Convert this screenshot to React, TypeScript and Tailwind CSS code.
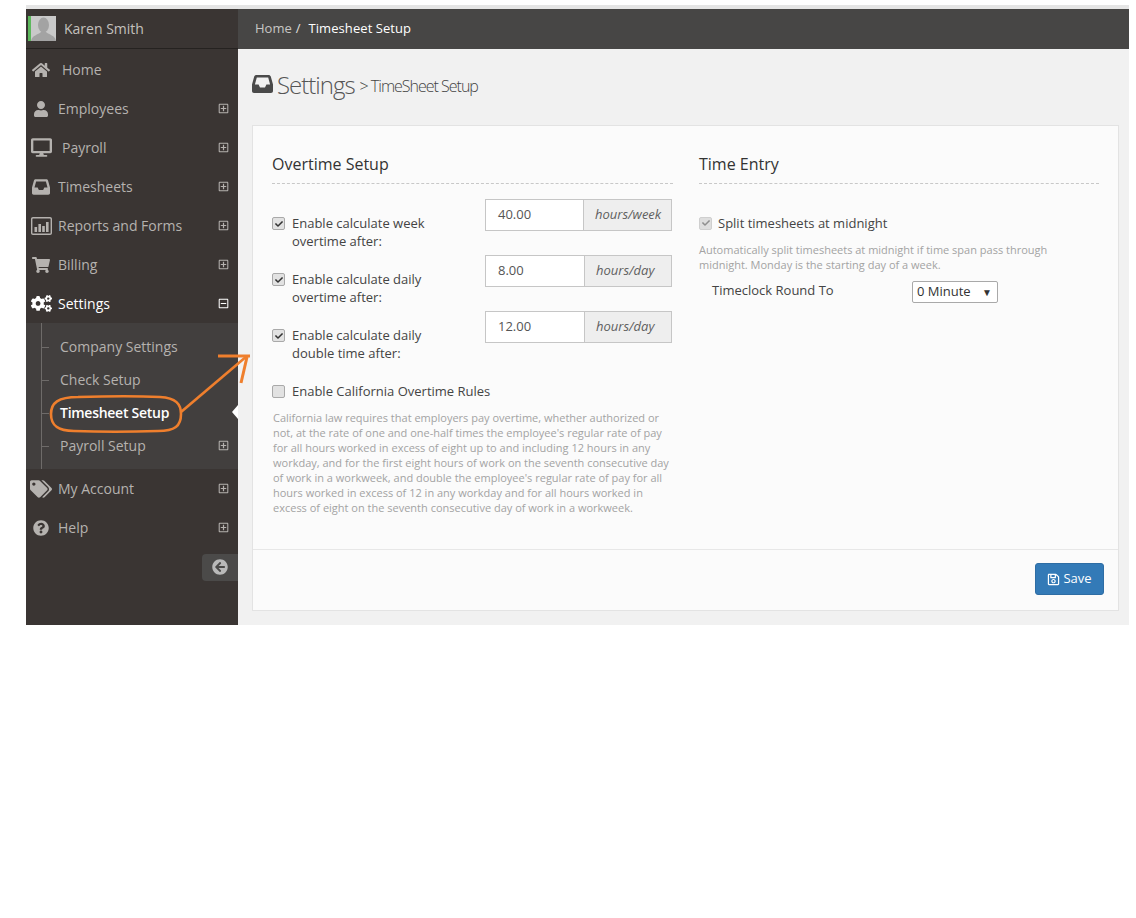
import {
  FaHome,
  FaUser,
  FaDesktop,
  FaShoppingCart,
  FaCogs,
  FaTags,
  FaQuestionCircle,
  FaArrowCircleLeft,
  FaRegPlusSquare,
  FaRegMinusSquare,
  FaRegSave,
  FaCheck,
} from 'react-icons/fa'
import type { ReactNode } from 'react'

function InboxIcon({ className }: { className: string }) {
  return (
    <svg viewBox="0 0 21 18" className={className} fill="currentColor" fillRule="evenodd">
      <path d="M4.5 0 H16.5 C17.6 0 18.4 .6 18.8 1.6 L21 9.5 V16 C21 17.2 20.2 18 19 18 H2 C.8 18 0 17.2 0 16 V9.5 L2.2 1.6 C2.6 .6 3.4 0 4.5 0 Z M4.8 2.6 L2.9 9.6 H6.6 L8 12.4 H13 L14.4 9.6 H18.1 L16.2 2.6 Z" />
    </svg>
  )
}

function ReportsIcon() {
  return (
    <svg viewBox="0 0 21 18" className="w-[21px] h-[18px]" fill="currentColor">
      <path fillRule="evenodd" d="M2 0 H19 C20.2 0 21 .8 21 2 V16 C21 17.2 20.2 18 19 18 H2 C.8 18 0 17.2 0 16 V2 C0 .8 .8 0 2 0 Z M2 1.4 C1.6 1.4 1.4 1.6 1.4 2 V16 C1.4 16.4 1.6 16.6 2 16.6 H19 C19.4 16.6 19.6 16.4 19.6 16 V2 C19.6 1.6 19.4 1.4 19 1.4 Z" />
      <rect x="3.5" y="10" width="2.6" height="5" />
      <rect x="7.4" y="7" width="2.6" height="8" />
      <rect x="11.2" y="9" width="2.6" height="6" />
      <rect x="15" y="5" width="2.6" height="10" />
    </svg>
  )
}

const topNav = [
  { label: 'Home', icon: <FaHome className="w-[18px] h-[18px]" />, textClass: 'ml-[10px]', expand: false },
  { label: 'Employees', icon: <FaUser className="w-[16px] h-[16px]" />, textClass: 'ml-[6px]', expand: true },
  { label: 'Payroll', icon: <FaDesktop className="w-[21px] h-[19px]" />, textClass: 'ml-[10px]', expand: true },
  { label: 'Timesheets', icon: <InboxIcon className="w-[18px] h-[16px]" />, textClass: 'ml-[6px]', expand: true },
  { label: 'Reports and Forms', icon: <ReportsIcon />, textClass: 'ml-[6px]', expand: true },
  { label: 'Billing', icon: <FaShoppingCart className="w-[18px] h-[16px]" />, textClass: 'ml-[6px]', expand: true },
]

const subNav = [
  { label: 'Company Settings', active: false, expand: false },
  { label: 'Check Setup', active: false, expand: false },
  { label: 'Timesheet Setup', active: true, expand: false },
  { label: 'Payroll Setup', active: false, expand: true },
]

const overtimeRows = [
  { line1: 'Enable calculate week', line2: 'overtime after:', value: '40.00', unit: 'hours/week', inputClass: 'w-[98px]' },
  { line1: 'Enable calculate daily', line2: 'overtime after:', value: '8.00', unit: 'hours/day', inputClass: 'w-[99px]' },
  { line1: 'Enable calculate daily', line2: 'double time after:', value: '12.00', unit: 'hours/day', inputClass: 'w-[99px]' },
]

function Box({ checked, disabled }: { checked?: boolean; disabled?: boolean }) {
  return (
    <span
      className={`w-[13px] h-[13px] shrink-0 rounded-[2px] border flex items-center justify-center ${
        disabled ? 'border-[#cfcfcf] bg-[#dedede] text-[#8f8f8f]' : 'border-[#a9a9a9] bg-[#e2e2e2] text-[#333333]'
      }`}
    >
      {checked && <FaCheck className="w-[8px] h-[8px]" />}
    </span>
  )
}

function NavRow({ icon, label, textClass, expand }: { icon: ReactNode; label: string; textClass: string; expand?: boolean }) {
  return (
    <div className="h-[39px] flex items-center pl-[4px] pr-[9px] text-[14px] text-[#b5b2af]">
      <span className="w-[22px] flex justify-center">{icon}</span>
      <span className={`flex-1 ${textClass}`}>{label}</span>
      {expand && <FaRegPlusSquare className="w-[11px] h-[11px] text-[#b5b2af]" />}
    </div>
  )
}

function Sidebar() {
  return (
    <aside className="w-[212px] shrink-0 bg-[#3a3533] flex flex-col relative">
      <div className="h-[40px] border-b border-[#252220] flex items-center pl-[2px]">
        <div className="w-[28px] h-[25px] border-l-[3px] border-[#5cb85c] bg-[#c9c9c9] overflow-hidden">
          <svg viewBox="0 0 25 25" className="w-[25px] h-[25px]">
            <ellipse cx="12.5" cy="9" rx="5.5" ry="7.5" fill="#a3a3a3" />
            <path d="M0 25 C1 19 7 19 10 16 H15 C18 19 24 19 25 25 Z" fill="#a3a3a3" />
          </svg>
        </div>
        <span className="ml-[8px] text-[14px] text-[#c4c1be]">Karen Smith</span>
      </div>
      <div className="h-[1px]" />
      {topNav.map((item) => (
        <NavRow key={item.label} {...item} />
      ))}
      <div className="h-[39px] flex items-center pl-[4px] pr-[9px] text-[14px] text-white">
        <span className="w-[22px] flex justify-center">
          <FaCogs className="w-[21px] h-[19px]" />
        </span>
        <span className="flex-1 ml-[6px]">Settings</span>
        <FaRegMinusSquare className="w-[11px] h-[11px] text-white" />
      </div>

      {/* Settings submenu */}
      <div className="relative bg-[#423f3e] py-[7px] h-[146px]">
        <div className="absolute left-[15px] top-0 bottom-0 w-px bg-[#6e6b69]" />
        {subNav.map((item) => (
          <div
            key={item.label}
            className={`relative h-[33px] flex items-center pl-[34px] pr-[9px] text-[14px] ${
              item.active ? 'text-white font-semibold tracking-[-0.27px]' : 'text-[#b5b2af]'
            }`}
          >
            <span className="absolute left-[15px] top-1/2 w-[8px] h-px bg-[#6e6b69]" />
            <span className="flex-1">{item.label}</span>
            {item.expand && <FaRegPlusSquare className="w-[11px] h-[11px] text-[#b5b2af]" />}
            {item.active && (
              <span className="absolute right-0 top-[9px] w-0 h-0 border-y-[7px] border-y-transparent border-r-[6px] border-r-white" />
            )}
          </div>
        ))}
      </div>

      <NavRow icon={<FaTags className="w-[22px] h-[18px]" />} label="My Account" textClass="ml-[6px]" expand />
      <NavRow icon={<FaQuestionCircle className="w-[16px] h-[16px]" />} label="Help" textClass="ml-[6px]" expand />

      <div className="flex justify-end mt-[6.5px]">
        <div className="w-[36px] h-[27px] bg-[#4b4a49] rounded-l-[4px] flex items-center justify-center">
          <FaArrowCircleLeft className="w-[16px] h-[16px] text-[#b9b9b9]" />
        </div>
      </div>
    </aside>
  )
}

function OvertimeColumn() {
  return (
    <div>
      <h3 className="pt-[27px] pb-[8px] text-[16px] leading-[22px] text-[#333333] border-b border-dashed border-[#c8c8c8]">Overtime Setup</h3>
      <div className="mt-[15px]">
        {overtimeRows.map((row) => (
          <div key={row.value} className="flex h-[56px]">
            <div className="w-[213px] flex pt-[15px] text-[13px] leading-[18px] text-[#444444]">
              <span className="mt-[3px] mr-[7px]">
                <Box checked />
              </span>
              <div>
                {row.line1}
                <br />
                {row.line2}
              </div>
            </div>
            <div className="flex h-[32px] w-[187px] border border-[#c6c6c6] text-[13px]">
              <div className={`${row.inputClass} bg-white flex items-center pl-[12px] text-[#555555] border-r border-[#c6c6c6]`}>{row.value}</div>
              <div className="flex-1 bg-[#eeeeee] flex items-center pl-[11px] italic text-[#5f5f5f] pb-[1px]">{row.unit}</div>
            </div>
          </div>
        ))}
      </div>
      <div className="mt-[15px] flex items-center text-[13px] leading-[18px] text-[#444444]">
        <span className="mr-[7px]">
          <Box />
        </span>
        Enable California Overtime Rules
      </div>
      <p className="mt-[10px] pl-[1px] text-[11px] leading-[15px] text-[#a3a3a3] w-[400px]">
        California law requires that employers pay overtime, whether authorized or
        <br />
        not, at the rate of one and one-half times the employee's regular rate of pay
        <br />
        for all hours worked in excess of eight up to and including 12 hours in any
        <br />
        workday, and for the first eight hours of work on the seventh consecutive day
        <br />
        of work in a workweek, and double the employee's regular rate of pay for all
        <br />
        hours worked in excess of 12 in any workday and for all hours worked in
        <br />
        excess of eight on the seventh consecutive day of work in a workweek.
      </p>
    </div>
  )
}

function TimeEntryColumn() {
  return (
    <div>
      <h3 className="pt-[27px] pb-[8px] text-[16px] leading-[22px] text-[#333333] border-b border-dashed border-[#c8c8c8]">Time Entry</h3>
      <div className="mt-[30px] flex items-center text-[13px] leading-[18px] text-[#444444]">
        <span className="mr-[6px]">
          <Box checked disabled />
        </span>
        Split timesheets at midnight
      </div>
      <p className="mt-[10px] text-[11px] leading-[15px] text-[#a3a3a3]">
        Automatically split timesheets at midnight if time span pass through
        <br />
        midnight. Monday is the starting day of a week.
      </p>
      <div className="mt-[9px] flex text-[13px] text-[#444444]">
        <div className="w-[213px] pl-[13px] leading-[18px]">Timeclock Round To</div>
        <div className="w-[86px] h-[22px] border border-[#a9a9a9] rounded-[2px] bg-white flex items-center justify-between pl-[4px] pr-[5px] text-[#333333]">
          <span>0 Minute</span>
          <span className="text-[10px] leading-none">▼</span>
        </div>
      </div>
    </div>
  )
}

export default function App() {
  return (
    <div className="relative w-full h-[918px] bg-white overflow-hidden font-['Open_Sans',sans-serif]">
      <div className="ml-[26px] mt-[5px] w-[1103px] inline-block align-top">
        <div className="h-[4px] bg-[#e5e5e5]" />
        <div className="flex h-[616px]">
          <Sidebar />
          <main className="flex-1 bg-[#f1f1f1] flex flex-col">
            <div className="h-[40px] bg-[#474645] flex items-center pl-[17px] text-[13px] shrink-0">
              <span className="text-[#c8c6c4]">Home</span>
              <span className="text-[#e0e0e0] ml-[4px]">/</span>
              <span className="text-white ml-[8px] tracking-[0.07px]">Timesheet Setup</span>
            </div>

            <div className="pl-[14px] pr-[10px]">
              <div className="h-[76px] flex items-center text-[#4a4a4a] pb-[5px]">
                <InboxIcon className="w-[21px] h-[18px] mb-[2px]" />
                <span className="ml-[4px] text-[24px] font-light tracking-[-1px] text-[#555555]">Settings</span>
                <span className="ml-[5px] mt-[3px] text-[16px] font-light tracking-[-1px] text-[#444444]">&gt; TimeSheet Setup</span>
              </div>

              {/* Card */}
              <div className="h-[486px] bg-[#fbfbfb] border border-[#e3e3e3] flex flex-col">
                <div className="h-[423px] grid grid-cols-[401px_400px] gap-x-[26px] pl-[19px] border-b border-[#e7e7e7] box-content">
                  <OvertimeColumn />
                  <TimeEntryColumn />
                </div>
                <div className="flex justify-end pt-[13px] pr-[14px]">
                  <button className="w-[69px] h-[32px] bg-[#337ab7] border border-[#2e6da4] rounded-[3px] text-white text-[13px] flex items-center justify-center">
                    <FaRegSave className="w-[13px] h-[13px] mr-[3px]" />
                    Save
                  </button>
                </div>
              </div>
            </div>
          </main>
        </div>
      </div>

      {/* hand-drawn annotation */}
      <svg className="absolute left-0 top-0 pointer-events-none" width="260" height="440" fill="none" stroke="#ef7f2d" strokeWidth="2.6">
        <path d="M78 397 C110 396 140 396 160 397 C176 398 181 404 181 414 C181 426 175 431 158 431 C130 432 100 432 74 431 C57 431 51 425 51 414 C51 403 58 397 78 397 Z" />
        <path d="M181 412 L247 356" />
        <path d="M218 356 H250" strokeWidth="3" />
        <path d="M247 357 L241 383" strokeWidth="3" />
      </svg>
    </div>
  )
}
